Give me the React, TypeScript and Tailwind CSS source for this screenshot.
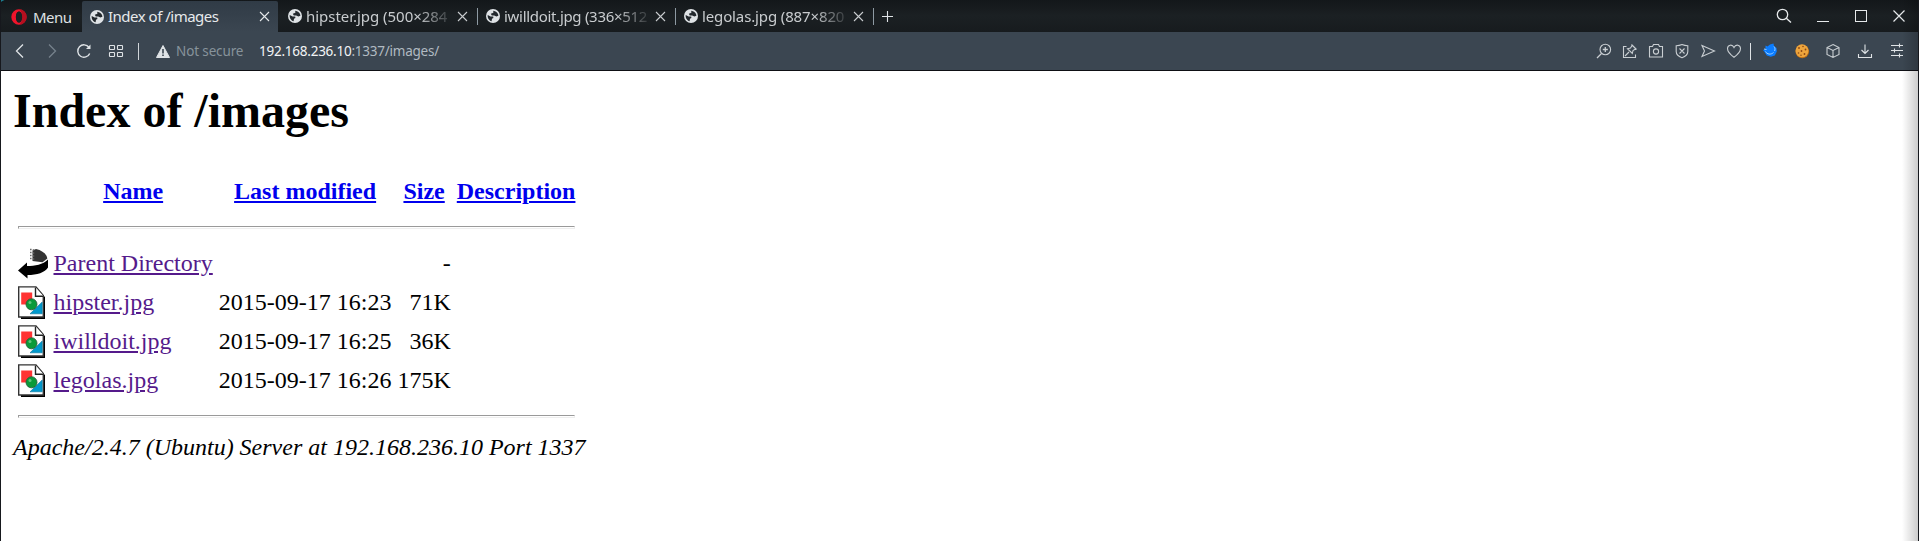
import type { ReactNode } from "react";

type IconProps = { children: ReactNode; size?: number; className?: string };

function Icon({ children, size = 16, className = "" }: IconProps) {
  return (
    <svg
      width={size}
      height={size}
      viewBox={`0 0 ${size} ${size}`}
      fill="none"
      stroke="currentColor"
      strokeWidth="1.1"
      className={`block shrink-0 ${className}`}
    >
      {children}
    </svg>
  );
}

function Globe() {
  return (
    <svg width="14" height="14" viewBox="0 0 14 14" className="block shrink-0">
      <circle cx="7" cy="7" r="7" fill="#dfe3e6" />
      <path
        d="M1.700 6 4.600 7.400 7.200 7.600 7.400 9 6 9.800 5.600 12.200C3.200 11.600 1.300 9.200 1.700 6ZM7.200 1.700 9 2.200C11 3 12.300 4.600 12.400 6.800L10.400 7.600 8.200 6.600 5.800 6.400 4.800 4.800 7.400 3.800Z"
        fill="#22282d"
      />
    </svg>
  );
}

function CloseMark() {
  return (
    <Icon size={11}>
      <path d="M1 1 10 10M10 1 1 10" />
    </Icon>
  );
}

function Tab({ title, tracking }: { title: string; tracking: string }) {
  return (
    <div className="flex h-8 w-[198px] items-center pl-2 text-[#c9cccf]">
      <Globe />
      <div
        className={`ml-1 w-[145px] whitespace-nowrap text-[15px] leading-8 [mask-image:linear-gradient(to_right,black_112px,transparent_149px)] ${tracking}`}
      >
        {title}
      </div>
      <div className="ml-[6px]">
        <CloseMark />
      </div>
      <div className="ml-auto h-[17px] w-px bg-[#8e9aa3]" />
    </div>
  );
}

function Slot({ children, className }: { children: ReactNode; className: string }) {
  return <div className={`flex h-full shrink-0 items-center justify-center ${className}`}>{children}</div>;
}

function TabBar() {
  return (
    <div className="flex h-8 bg-linear-to-b from-[#13171a] via-[#1b2023] to-[#171b1e]">
      <div className="flex w-[81px] items-center pl-[10px] pt-px">
        <svg width="16" height="16" viewBox="0 0 16 16" className="block">
          <path fillRule="evenodd" d="M8 .3a7.7 7.7 0 1 0 0 15.4A7.7 7.7 0 0 0 8 .3ZM8 2.4c1.9 0 3.1 2.4 3.1 5.6S9.9 13.6 8 13.6 4.9 11.2 4.9 8 6.1 2.4 8 2.4Z" fill="#f0142b" />
          <path d="M8 .3a7.7 7.7 0 0 1 0 15.4c4-1.5 4.3-13.500 0-15.400Z" fill="#a30d1c" opacity=".75" />
          <ellipse cx="8" cy="8" rx="3.1" ry="5.600" fill="#1b2023" />
        </svg>
        <span className="ml-[6px] text-[15px] leading-8 tracking-[-0.5px] text-[#dfe1e3]">Menu</span>
      </div>
      <div className="mt-px flex h-[31px] w-[196px] items-center rounded-t-[2px] bg-linear-to-b from-[#303b46] to-[#3b4651] pl-2 text-[#e6e9eb]">
        <Globe />
        <div className="ml-1 w-[151px] whitespace-nowrap text-[15px] leading-[31px] tracking-[-0.5px]">Index of /images</div>
        <CloseMark />
      </div>
      <div className="ml-0.5 flex">
        <Tab title="hipster.jpg (500×284" tracking="tracking-[-0.03px]" />
        <Tab title="iwilldoit.jpg (336×512" tracking="tracking-[-0.3px]" />
        <Tab title="legolas.jpg (887×820" tracking="tracking-[-0.13px]" />
      </div>
      <Slot className="w-[27px] text-[#dfe3e6]">
        <Icon size={11}>
          <path d="M5.500 0V11M0 5.500H11" />
        </Icon>
      </Slot>
      <div className="ml-auto flex text-[#e6e9eb]">
        <Slot className="w-10 pb-px">
          <Icon>
            <circle cx="6.500" cy="6.500" r="5.200" strokeWidth="1.3" />
            <path d="m10.300 10.300 4.700 4.200" strokeWidth="1.4" />
          </Icon>
        </Slot>
        <Slot className="w-[38px]">
          <div className="mt-[11px] h-px w-3 bg-[#e6e9eb]" />
        </Slot>
        <Slot className="w-[38px]">
          <div className="size-3 border border-[#e6e9eb]" />
        </Slot>
        <Slot className="w-[38px]">
          <Icon size={12}>
            <path d="M.5.5 11.500 11.500M11.500.5.5 11.500" strokeWidth="1.2" />
          </Icon>
        </Slot>
      </div>
    </div>
  );
}

function ToolBar() {
  return (
    <div className="flex h-[39px] items-center border-b border-[#0e0f14] bg-[#3b4651] text-[#dfe3e6]">
      <Slot className="ml-[3px] w-8">
        <Icon>
          <path d="M11 1.500 4.500 8 11 14.500" strokeWidth="1.3" />
        </Icon>
      </Slot>
      <Slot className="w-8 text-[#76828c]">
        <Icon>
          <path d="M5 1.500 11.500 8 5 14.500" strokeWidth="1.3" />
        </Icon>
      </Slot>
      <Slot className="w-8">
        <Icon>
          <path d="M13 4.400A6.200 6.200 0 1 0 13.700 10.400" strokeWidth="1.4" />
          <path d="M14.500 1.500V6H10Z" fill="currentColor" stroke="none" />
        </Icon>
      </Slot>
      <Slot className="w-8">
        <Icon>
          <rect x="1.500" y="2.500" width="5" height="4" rx=".6" />
          <rect x="9.500" y="2.500" width="5" height="4" rx=".6" />
          <rect x="1.500" y="9.500" width="5" height="4" rx=".6" />
          <rect x="9.500" y="9.500" width="5" height="4" rx=".6" />
        </Icon>
      </Slot>
      <div className="ml-[6px] h-[17px] w-px bg-[#d0d5d9]" />
      <svg width="14" height="13" viewBox="0 0 14 13" className="ml-[17px] block">
        <path d="M7 .5 13.500 12.500H.5Z" fill="#dfe3e6" stroke="#dfe3e6" strokeLinejoin="round" />
        <path d="M6.200 4h1.600v4.500H6.200ZM6.200 9.500h1.600V11H6.200Z" fill="#3b4651" />
      </svg>
      <span className="ml-[6px] w-[83px] whitespace-nowrap pt-px text-[13.500px] tracking-[-0.13px] text-[#87939b]">Not secure</span>
      <span className="whitespace-nowrap pt-px text-[13.500px] tracking-[-0.24px] text-[#b1bac1]">
        <span className="text-[#f2f4f5]">192.168.236.10</span>:1337/images/
      </span>

      <div className="ml-auto flex h-full items-center pr-[5px] text-[#c9ced2]">
        <Slot className="w-[26px]">
          <Icon>
            <circle cx="9.300" cy="6.500" r="5.300" />
            <path d="M9.300 4v5M6.800 6.500h5M5.500 10.500 1 15" strokeWidth="1.3" />
          </Icon>
        </Slot>
        <Slot className="w-[26px]">
          <Icon>
            <path d="M4.500 3.500H1.500v11h12V11.500M3 13 7 9M9.500 1.500l5 5M10.200 2.200 8.500 5 5.500 5.700 10.300 10.500 11 7.500 13.800 5.800" />
          </Icon>
        </Slot>
        <Slot className="w-[26px]">
          <Icon>
            <path d="M1.500 3.500h3l1-2h5l1 2h3v10.500h-13Z" />
            <circle cx="8" cy="8.500" r="2.600" />
          </Icon>
        </Slot>
        <Slot className="w-[26px]">
          <Icon>
            <path d="M8 1.500c2 .9 4 1.200 5.800 1.200v5.800c0 3-2.500 5-5.800 6.200-3.300-1.200-5.800-3.200-5.800-6.200V2.700C4 2.700 6 2.400 8 1.500ZM5.500 5.500l5 5M10.500 5.500l-5 5" />
          </Icon>
        </Slot>
        <Slot className="w-[26px]">
          <Icon>
            <path d="M2 2.500 14.500 8 2 13.500 4.500 8Z" />
          </Icon>
        </Slot>
        <Slot className="w-[26px]">
          <Icon>
            <path d="M8 14.300C4 11.500 1.500 9 1.500 5.600 1.500 1.600 6.300.9 8 4.500c1.700-3.600 6.500-2.900 6.500 1.100C14.500 9 12 11.500 8 14.300Z" />
          </Icon>
        </Slot>
        <Slot className="w-[7px]">
          <div className="h-[17px] w-px bg-[#dfe3e6]" />
        </Slot>
        <Slot className="w-8 pb-[3px]">
          <svg width="16" height="16" viewBox="0 0 16 16" className="block">
            <path d="M3.500 3.500 5.500 4.500 8 2.500l3.500-1L12 4l2.500 2 .3 3.500-2 4-4 1.300-4-1.300L2.500 10 1 8l2.500-1Z" fill="#0a7cff" />
            <path d="M3.500 9.500c1.500 3 5.500 3.500 8 1M12 4.500c1.200 1.500 1.200 3 .6 4.500M2 7l2.500 .5" stroke="#9fd2ff" strokeWidth="1" fill="none" />
          </svg>
        </Slot>
        <Slot className="w-[31px]">
          <svg width="16" height="16" viewBox="0 0 16 16" className="block">
            <circle cx="8.300" cy="8.500" r="6.800" fill="#b86a14" />
            <circle cx="8" cy="7.800" r="6.500" fill="#eda43c" />
            <g fill="#8a4714">
              <circle cx="5" cy="5" r=".9" />
              <circle cx="9" cy="3.500" r=".8" />
              <circle cx="11.500" cy="6.500" r=".9" />
              <circle cx="7.500" cy="8" r=".9" />
              <circle cx="4.500" cy="10" r=".8" />
              <circle cx="10.500" cy="11" r=".9" />
              <circle cx="7" cy="12.300" r=".7" />
            </g>
          </svg>
        </Slot>
        <Slot className="w-[31px]">
          <Icon>
            <path d="M8 1.500 14 4.500v7L8 14.500 2 11.500v-7ZM2 4.500 8 7.500l6-3M8 7.500v7" />
          </Icon>
        </Slot>
        <Slot className="w-[33px] text-[#dfe3e6]">
          <Icon>
            <path d="M8 1.500v9M4.500 7 8 10.500 11.500 7M1.500 11v3.500h13V11" />
          </Icon>
        </Slot>
        <Slot className="w-8 text-[#dfe3e6]">
          <Icon>
            <path d="M2 3.500h12M2 8.500h12M2 13.500h12M10.500 1.500v4M5.500 6.500v4M10.500 11.500v4" transform="translate(0 -1)" />
          </Icon>
        </Slot>
      </div>
    </div>
  );
}

function BackIcon() {
  return (
    <svg width="30" height="33" viewBox="0 0 30 33" className="block">
      <path d="M14.500 3.500 18 2c6 1.500 10.500 4.500 11.300 9.500L24.500 15.300 14.500 14Z" fill="#333" />
      <path d="M12.800 1.800v12M15.500 2.300v11" stroke="#666" strokeWidth="1.500" strokeDasharray="1.500 1.500" />
      <path d="M0 23.500 9 15.500v3.500c8 0 16-1.500 21-6.500v8c-3 5-11 7.500-20.500 7.500v3.500Z" fill="#000" />
    </svg>
  );
}

function ImageIcon() {
  return (
    <svg width="30" height="33" viewBox="0 0 30 33" className="block">
      <path d="M3 3h15l9 8v22H3Z" fill="#000" />
      <path d="M.7.9H18l7.300 8.500V31H.7Z" fill="#fff" stroke="#333" strokeWidth="1.400" />
      <path d="M17.500 1.500v8.700h8" fill="#fff" stroke="#222" strokeWidth="1.400" />
      <path d="M3.200 6.500h11v12H3.200Z" fill="#f33" />
      <path d="M24.200 16v11.800H12Z" fill="#09c" stroke="#067199" strokeWidth=".6" />
      <circle cx="13.500" cy="18.300" r="5.500" fill="#0a9a3a" stroke="#2b5f3b" strokeWidth=".9" />
      <circle cx="12" cy="16.500" r="1.500" fill="#5cc47c" />
    </svg>
  );
}

const files = [
  { name: "hipster.jpg", modified: "2015-09-17 16:23", size: "71K" },
  { name: "iwilldoit.jpg", modified: "2015-09-17 16:25", size: "36K" },
  { name: "legolas.jpg", modified: "2015-09-17 16:26", size: "175K" },
];

function Rule() {
  return (
    <tr>
      <td colSpan={5} className="p-[1.5px]">
        <hr className="my-3 h-[3px] border border-[#9a9a9a] border-b-[#eeeeee] border-r-[#eeeeee]" />
      </td>
    </tr>
  );
}

function Heading({ children }: { children: string }) {
  return (
    <th className="p-[1.5px] text-center font-bold">
      <a className="text-[#0000ee] underline">{children}</a>
    </th>
  );
}

function Row({ icon, name, modified, size }: { icon: ReactNode; name: string; modified?: string; size: string }) {
  return (
    <tr>
      <td className="p-[1.5px] align-top">{icon}</td>
      <td className="p-[1.5px]">
        <a className="text-[#551a8b] underline">{name}</a>
      </td>
      <td className="p-[1.5px] text-right">{modified}</td>
      <td className="p-[1.5px] text-right">{size}</td>
      <td className="p-[1.5px]" />
    </tr>
  );
}

export default function App() {
  return (
    <div className="relative flex h-[541px] w-[1919px] flex-col overflow-hidden border-x border-[#16181d] bg-white font-['Noto_Sans',sans-serif]">
      <TabBar />
      <ToolBar />
      <main className="pl-3 pt-3 font-['Liberation_Serif',serif] text-[24px] leading-[27px] text-black">
        <h1 className="mb-8 text-[48px] font-bold leading-[55px]">Index of /images</h1>
        <table className="border-separate border-spacing-[3px] whitespace-nowrap">
          <tbody>
            <tr>
              <th className="p-[1.5px]">
                <div className="h-[33px] w-[30px]" />
              </th>
              <Heading>Name</Heading>
              <Heading>Last modified</Heading>
              <Heading>Size</Heading>
              <Heading>Description</Heading>
            </tr>
            <Rule />
            <Row icon={<BackIcon />} name="Parent Directory" size="-" />
            {files.map((f) => (
              <Row key={f.name} icon={<ImageIcon />} {...f} />
            ))}
            <Rule />
          </tbody>
        </table>
        <address className="italic">Apache/2.4.7 (Ubuntu) Server at 192.168.236.10 Port 1337</address>
      </main>
      <div className="pointer-events-none absolute bottom-0 right-0 top-0 w-4 bg-linear-to-r from-transparent to-black/20" />
      <svg width="5" height="4" className="absolute -left-px top-0">
        <path d="M0 0h4.500L1.500 1.500 0 4Z" fill="#1c7d90" />
      </svg>
    </div>
  );
}
